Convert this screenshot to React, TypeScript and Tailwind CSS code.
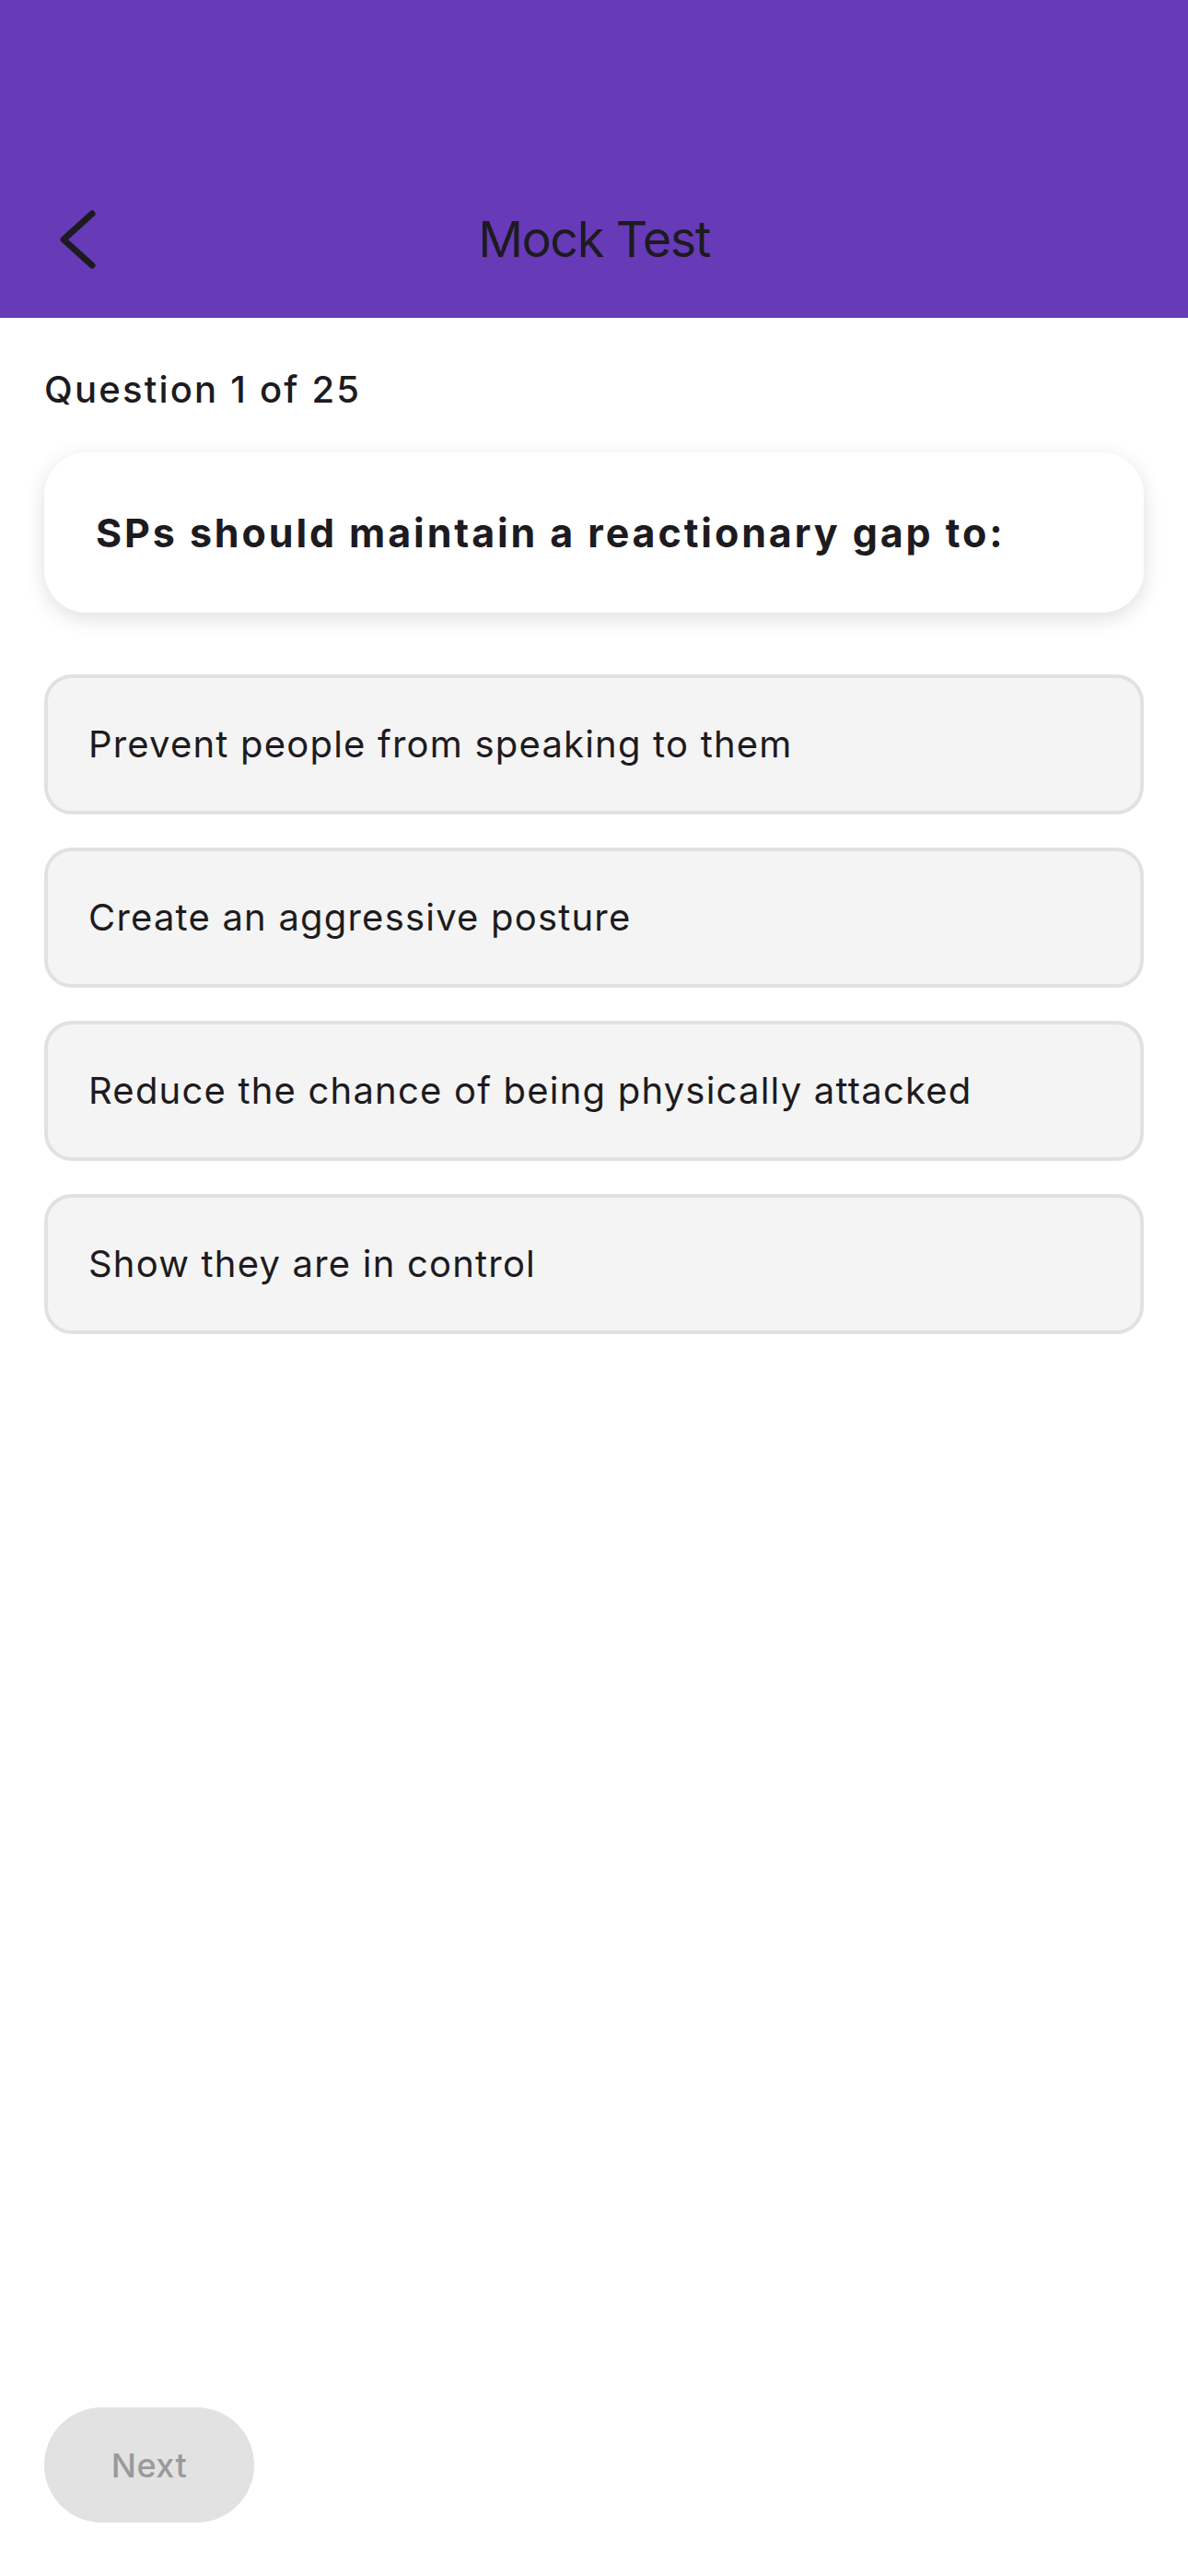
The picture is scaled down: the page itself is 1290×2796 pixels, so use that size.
import React from "react";

const options = [
  "Prevent people from speaking to them",
  "Create an aggressive posture",
  "Reduce the chance of being physically attacked",
  "Show they are in control",
];

export default function App() {
  return (
    <div
      className="min-h-screen w-full bg-white flex flex-col"
      style={{ fontFamily: "Inter, 'Noto Sans', sans-serif" }}
    >
      <header className="h-[345px] bg-[#673ab7] flex flex-col justify-end">
        <div className="h-[170px] grid grid-cols-[1fr_auto_1fr] items-center">
          <div className="pl-[62px] flex items-center">
            <svg width="44" height="64" viewBox="0 0 44 64" fill="none">
              <path
                d="M38 4 L7 32 L38 60"
                stroke="#1d1b20"
                strokeWidth="7"
                strokeLinecap="round"
                strokeLinejoin="round"
              />
            </svg>
          </div>
          <h1 className="text-[54px] leading-none font-normal tracking-[-1.5px] text-[#1d1b20]">
            Mock Test
          </h1>
          <div />
        </div>
      </header>

      <main className="flex-1 flex flex-col px-[48px]">
        <p className="mt-[58px] text-[40px] leading-none font-medium text-[#1d1b20] tracking-[2.2px]">
          Question 1 of 25
        </p>

        <div className="mt-[48px] h-[174px] rounded-[46px] bg-white shadow-[0_6px_22px_rgba(0,0,0,0.13)] flex items-center pl-[56px] pr-[30px]">
          <p className="text-[43px] leading-none font-bold text-[#1d1b20] tracking-[2.9px] whitespace-nowrap">
            SPs should maintain a reactionary gap to:
          </p>
        </div>

        <div className="mt-[67px] flex flex-col gap-[36px]">
          {options.map((o) => (
            <div
              key={o}
              className="h-[152px] rounded-[30px] border-[4px] border-[#e1e1e1] bg-[#f4f4f4] flex items-center pl-[44px] pr-[30px]"
            >
              <span className="text-[40px] leading-none font-normal text-[#1d1b20] tracking-[1.2px] whitespace-nowrap">
                {o}
              </span>
            </div>
          ))}
        </div>

        <div className="mt-auto pb-[58px]">
          <button className="w-[228px] h-[125px] rounded-full bg-[#e2e2e2] flex items-center justify-center">
            <span className="text-[36px] leading-none font-medium text-[#9a9a9a] tracking-[0.5px]">
              Next
            </span>
          </button>
        </div>
      </main>
    </div>
  );
}
